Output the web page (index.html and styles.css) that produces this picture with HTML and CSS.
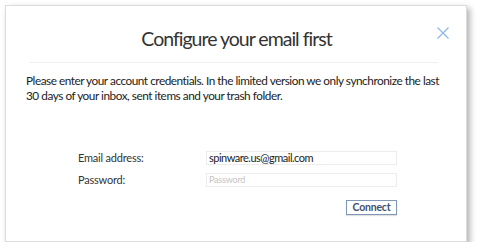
FILE: index.html
```html
<!DOCTYPE html>
<html>
<head>
<meta charset="utf-8">
<link rel="stylesheet" href="styles.css">
</head>
<body>
<div class="dialog">
  <div class="header">
    <h1 class="title">Configure your email first</h1>
    <svg class="close" width="12" height="12" viewBox="0 0 12 12"><path d="M0.5 0.5 L11.5 11.5 M11.5 0.5 L0.5 11.5" stroke="#8fb6ee" stroke-width="1.2" fill="none"/></svg>
  </div>
  <p class="intro">Please enter your account credentials. In the limited version we only synchronize the last 30 days of your inbox, sent items and your trash folder.</p>
  <div class="form">
    <label class="label">Email address:</label>
    <div class="input">spinware.us@gmail.com</div>
    <label class="label">Password:</label>
    <div class="input placeholder">Password</div>
    <div class="actions"><button class="btn">Connect</button></div>
  </div>
</div>
</body>
</html>
```
FILE: styles.css
```css
html, body { margin: 0; padding: 0; background: #fff; }
body { font-family: Lato, "Open Sans", sans-serif; color: #222; }
.dialog {
  position: relative;
  margin: 5px 0 0 5px;
  width: 460px;
  height: 235px;
  border: 1px solid #dcdcdc;
  box-shadow: 3px 3px 6px rgba(0,0,0,0.3);
  background: #fff;
  box-sizing: content-box;
}
.header {
  margin: 0 28px 0 23px;
  height: 56px;
  border-bottom: 1px solid #f0f0f0;
  display: flex;
  align-items: center;
  justify-content: center;
}
.title {
  margin: 8px 0 0 6px;
  font-weight: normal;
  font-size: 19.5px;
  letter-spacing: -1px;
  color: #333;
}
.close { position: absolute; top: 21px; right: 17px; }
.intro {
  margin: 10px 16px 0 20px;
  font-size: 11.8px;
  letter-spacing: -0.47px;
  line-height: 15px;
  color: #222;
}
.form {
  margin: 48px 0 0 72px;
  display: grid;
  grid-template-columns: 128px 191px;
  row-gap: 8px;
  font-size: 11px;
}
.label { line-height: 14px; color: #333; letter-spacing: -0.2px; }
.input {
  height: 14px;
  border: 1px solid #ececec;
  box-sizing: border-box;
  padding-left: 2px;
  font-size: 11px;
  letter-spacing: -0.5px;
  line-height: 12px;
  color: #222;
}
.placeholder { color: #c4c4c4; font-size: 9px; letter-spacing: -0.2px; }
.actions { grid-column: 2; display: flex; justify-content: flex-end; margin-top: 5px; }
.btn {
  font-family: Lato, sans-serif;
  font-size: 10.5px;
  font-weight: bold;
  letter-spacing: -0.2px;
  color: #3d5170;
  background: #fff;
  border: 1px solid #8098b8;
  box-shadow: 0 1px 1px rgba(0,0,0,0.12);
  width: 51px;
  height: 15px;
  padding: 0;
  line-height: 13px;
}
```
